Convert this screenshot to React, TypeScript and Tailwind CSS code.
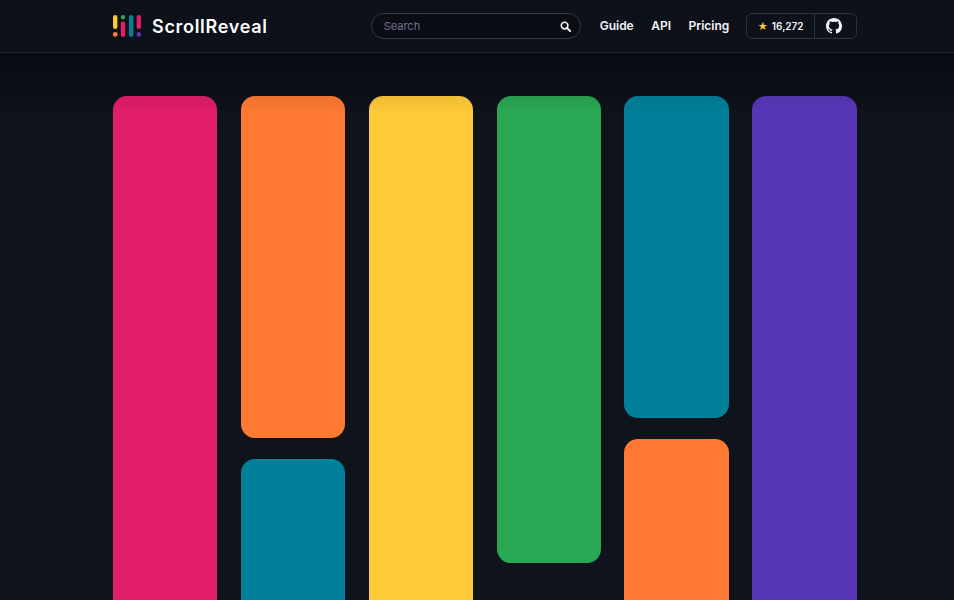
export default function App() {
  const cols: string[][] = [
    ["h-[560px] bg-[#e21e68]"],
    ["h-[342px] bg-[#fe7a33]", "h-[200px] bg-[#008099]"],
    ["h-[560px] bg-[#ffca38]"],
    ["h-[467px] bg-[#29a853]"],
    ["h-[322px] bg-[#008099]", "h-[200px] bg-[#fe7a33]"],
    ["h-[560px] bg-[#5837b7]"],
  ];
  return (
    <div className="relative h-[600px] w-[954px] overflow-hidden bg-[#0f131c] font-['Inter',sans-serif]">
      <header className="flex h-[53px] items-center border-b border-[#1f232c] bg-[#0d1119] pl-[113px] pr-[97px]">
        <svg width="28" height="22" viewBox="0 0 28 22" className="mr-[11px]">
          <rect x="0" y="0" width="4.4" height="14" rx="2.2" fill="#fcc934" />
          <circle cx="2.2" cy="19.4" r="2.4" fill="#fe7a33" />
          <circle cx="10" cy="2.2" r="2.2" fill="#29a853" />
          <rect x="7.8" y="6.5" width="4.4" height="15.5" rx="2.2" fill="#e21e68" />
          <rect x="16" y="0" width="4.4" height="22" rx="2.2" fill="#008099" />
          <rect x="23.6" y="0" width="4.4" height="14" rx="2.2" fill="#e21e68" />
          <circle cx="25.8" cy="19.4" r="2.4" fill="#5837b7" />
        </svg>
        <span className="text-[18px] font-semibold tracking-[0.7px] text-white">ScrollReveal</span>
        <div className="ml-[103px] flex h-[26px] w-[210px] items-center justify-between rounded-full border border-[#343a48] bg-[#0a0d14] pl-3 pr-[9px]">
          <span className="text-[11px] text-[#6e7491]">Search</span>
          <svg width="11" height="11" viewBox="0 0 12 12" fill="none" stroke="#f0f0f0" strokeWidth="1.8">
            <circle cx="5" cy="5" r="3.6" />
            <path d="M7.8 7.8 11 11" strokeLinecap="round" strokeWidth="2.2" />
          </svg>
        </div>
        <nav className="ml-[19px] flex items-center gap-[17.5px] text-[12px] font-semibold text-[#f4f5f7]">
          <span>Guide</span>
          <span>API</span>
          <span>Pricing</span>
        </nav>
        <div className="ml-auto flex h-[26px] w-[111px] items-center rounded-[6px] border border-[#2c313d]">
          <div className="flex h-full w-[68px] items-center justify-center gap-1 border-r border-[#2c313d] text-[10px] font-semibold text-[#f4f5f7]">
            <span className="text-[10px] leading-none text-[#f7c93e]">★</span>
            16,272
          </div>
          <div className="flex flex-1 items-center justify-center pr-[3px]">
            <svg width="16" height="16" viewBox="0 0 16 16" fill="#f5f5f5">
              <path d="M8 0C3.58 0 0 3.58 0 8c0 3.54 2.29 6.53 5.47 7.59.4.07.55-.17.55-.38 0-.19-.01-.82-.01-1.49-2.01.37-2.53-.49-2.69-.94-.09-.23-.48-.94-.82-1.13-.28-.15-.68-.52-.01-.53.63-.01 1.08.58 1.23.82.72 1.21 1.87.87 2.33.66.07-.52.28-.87.51-1.07-1.78-.2-3.64-.89-3.64-3.95 0-.87.31-1.59.82-2.15-.08-.2-.36-1.02.08-2.12 0 0 .67-.21 2.2.82.64-.18 1.32-.27 2-.27s1.36.09 2 .27c1.53-1.04 2.2-.82 2.2-.82.44 1.1.16 1.92.08 2.12.51.56.82 1.27.82 2.15 0 3.07-1.87 3.75-3.65 3.95.29.25.54.73.54 1.48 0 1.07-.01 1.93-.01 2.2 0 .21.15.46.55.38A8.01 8.01 0 0 0 16 8c0-4.42-3.58-8-8-8z" />
            </svg>
          </div>
        </div>
      </header>
      <main className="flex h-[547px] gap-[23.5px] bg-[linear-gradient(to_bottom,#090c13,#0f131c_70px)] pl-[112.9px] pt-[43px]">
        {cols.map((c, i) => (
          <div key={i} className="flex w-[104.4px] flex-col gap-[21px]">
            {c.map((k, j) => (
              <div key={j} className={`w-full shrink-0 rounded-[14px] ${k}`} />
            ))}
          </div>
        ))}
      </main>
      <div className="pointer-events-none absolute inset-x-0 top-[53px] h-[60px] bg-gradient-to-b from-[#05070c]/25 to-transparent" />
    </div>
  );
}
